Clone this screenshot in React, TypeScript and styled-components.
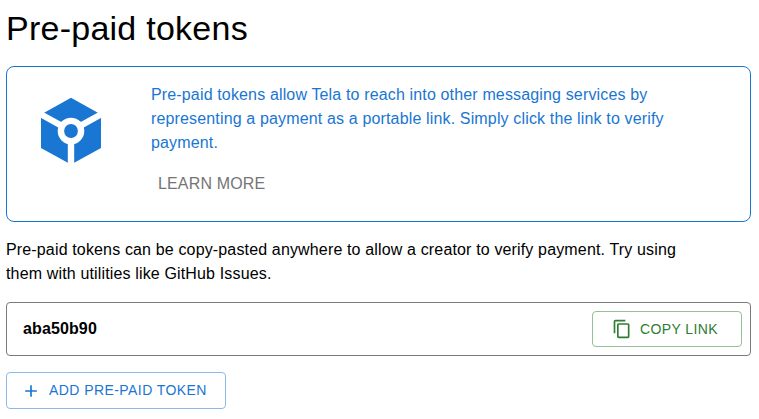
import React from "react";
import styled, { createGlobalStyle } from "styled-components";

const GlobalStyle = createGlobalStyle`
  * { box-sizing: border-box; }
  body {
    margin: 0;
    background: #fff;
    color: #000;
    font-family: Helvetica, "Liberation Sans", Arial, sans-serif;
    font-size: 16px;
    line-height: 24px;
    letter-spacing: 0.15px;
  }
`;

const Page = styled.main`
  display: flex;
  flex-direction: column;
  align-items: flex-start;
  padding: 7px 8px 0 6px;
`;

const Title = styled.h1`
  margin: 0 0 17px;
  font-size: 34px;
  font-weight: 400;
  line-height: 42px;
  letter-spacing: 0.25px;
  white-space: nowrap;
`;

const InfoCard = styled.section`
  display: flex;
  align-items: flex-start;
  width: 745px;
  height: 156px;
  padding: 16px 16px 0 31px;
  border: 1px solid #1976d2;
  border-radius: 8px;
`;

const Logo = styled.svg`
  flex: none;
  width: 66px;
  height: 70px;
  margin: 12px 47px 0 0;
`;

const InfoBody = styled.div`
  display: flex;
  flex-direction: column;
  align-items: flex-start;
`;

const InfoText = styled.p`
  margin: 0;
  color: #1976d2;
  white-space: nowrap;
`;

const LearnMore = styled.button`
  margin: 17px 0 0 7px;
  padding: 0;
  border: 0;
  background: none;
  color: #757575;
  font: inherit;
  letter-spacing: 0.15px;
`;

const Description = styled.p`
  margin: 16px 0;
  white-space: nowrap;
`;

const TokenRow = styled.div`
  display: flex;
  align-items: center;
  justify-content: space-between;
  width: 745px;
  height: 54px;
  padding: 0 8px 0 16px;
  border: 1px solid #7b7b7b;
  border-radius: 4px;
`;

const TokenName = styled.strong`
  font-weight: 700;
  letter-spacing: 0.12px;
`;

const OutlinedButton = styled.button<{ $tone: "green" | "blue" }>`
  display: flex;
  align-items: center;
  width: ${(p) => (p.$tone === "green" ? 150 : 220)}px;
  height: ${(p) => (p.$tone === "green" ? 36 : 37)}px;
  padding: ${(p) => (p.$tone === "green" ? "0 0 0 19px" : "0 0 0 14px")};
  gap: 8px;
  border: 1px solid ${(p) => (p.$tone === "green" ? "#97bf98" : "#8cbae8")};
  border-radius: 4px;
  background: #fff;
  color: ${(p) => (p.$tone === "green" ? "#2e7d32" : "#1976d2")};
  font: 400 14px/24px Helvetica, "Liberation Sans", Arial, sans-serif;
  letter-spacing: 0.4px;
  white-space: nowrap;
`;

const AddLabel = styled.span`
  padding-bottom: 2px;
  letter-spacing: 0.43px;
`;

const AddArea = styled.div`
  margin-top: 16px;
`;

const Icon = styled.svg`
  flex: none;
  width: 20px;
  height: 20px;
  fill: currentColor;
`;

export default function App() {
  return (
    <>
      <GlobalStyle />
      <Page>
        <Title>Pre-paid tokens</Title>
        <InfoCard>
          <Logo viewBox="0 0 66 70" aria-hidden="true">
            <path d="M33 2.8 63 19.4V53L33 69.6 3 53V19.4Z" fill="#1976d2" />
            <path d="M33 36 66 17.7M33 36 0 17.7M33 36V70" stroke="#fff" strokeWidth="6.4" />
            <circle cx="33" cy="36" r="13.3" fill="#fff" />
            <circle cx="33" cy="36" r="6.9" fill="#1976d2" />
          </Logo>
          <InfoBody>
            <InfoText>
              Pre-paid tokens allow Tela to reach into other messaging services by
              <br />
              representing a payment as a portable link. Simply click the link to verify
              <br />
              payment.
            </InfoText>
            <LearnMore>LEARN MORE</LearnMore>
          </InfoBody>
        </InfoCard>
        <Description>
          Pre-paid tokens can be copy-pasted anywhere to allow a creator to verify payment. Try using
          <br />
          them with utilities like GitHub Issues.
        </Description>
        <TokenRow>
          <TokenName>aba50b90</TokenName>
          <OutlinedButton $tone="green">
            <Icon viewBox="0 0 24 24" aria-hidden="true">
              <path d="M16 1H4c-1.1 0-2 .9-2 2v14h2V3h12V1zm3 4H8c-1.1 0-2 .9-2 2v14c0 1.1.9 2 2 2h11c1.1 0 2-.9 2-2V7c0-1.1-.9-2-2-2zm0 16H8V7h11v14z" />
            </Icon>
            COPY LINK
          </OutlinedButton>
        </TokenRow>
        <AddArea>
          <OutlinedButton $tone="blue">
            <Icon viewBox="0 0 24 24" aria-hidden="true">
              <path d="M19 13h-6v6h-2v-6H5v-2h6V5h2v6h6v2z" />
            </Icon>
            <AddLabel>ADD PRE-PAID TOKEN</AddLabel>
          </OutlinedButton>
        </AddArea>
      </Page>
    </>
  );
}
